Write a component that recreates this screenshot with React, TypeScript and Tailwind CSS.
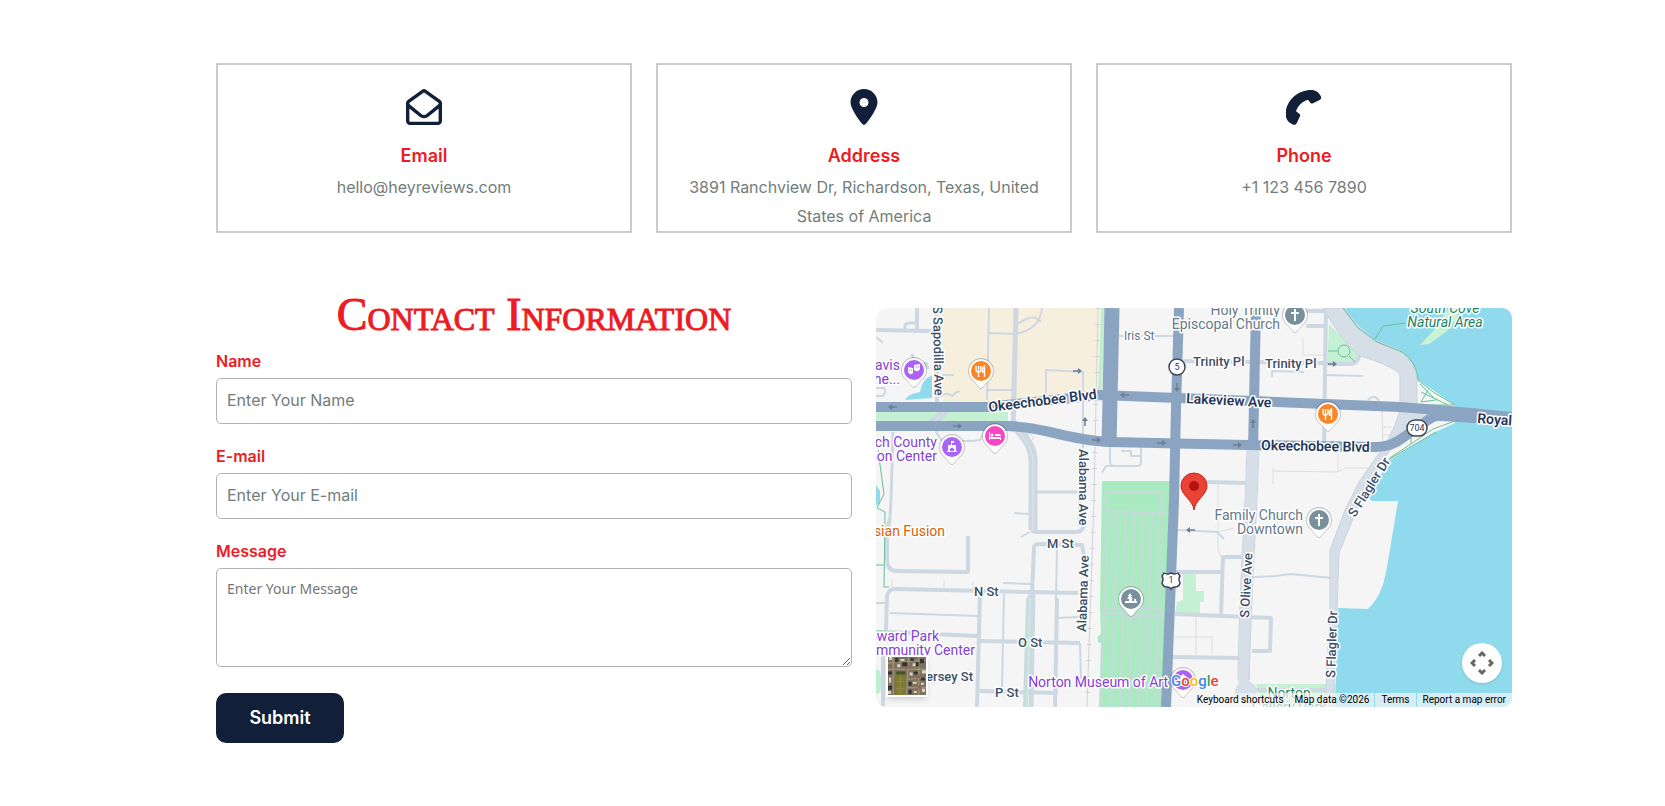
import type { ReactNode } from "react";
import { FaLocationDot, FaRegEnvelopeOpen } from "react-icons/fa6";

function PhoneIcon() {
  return (
    <svg viewBox="17 15 108 108" className="h-9 w-9 fill-current" aria-hidden="true">
      <path d="M16 90C16 53 50 18 92 18c14 0 25 8 30 20q2 6-3 9L98 58q-5 2-8-2l-7-9C66 52 53 64 47 82l10 7q4 3 2 8l-10 21q-3 6-10 4C24 117 16 106 16 90Z" />
    </svg>
  );
}

const cards = [
  { title: "Email", text: "hello@heyreviews.com", icon: <FaRegEnvelopeOpen className="h-9 w-9" /> },
  {
    title: "Address",
    text: "3891 Ranchview Dr, Richardson, Texas, United States of America",
    icon: <FaLocationDot className="h-9 w-9" />,
  },
  { title: "Phone", text: "+1 123 456 7890", icon: <PhoneIcon /> },
];

// local streets: [path, width]
const streets: [string, number][] = [
  ["M0 22L56 23", 4],
  ["M41 0V22", 4],
  ["M29 21V17Q29 15 34 15H41", 3],
  ["M0 29L7 35", 2],
  ["M36 46L38 54Q44 60 50 55L52 61", 3],
  ["M0 80H8Q11 84 7 88H0", 2],
  ["M61 0V94", 4],
  ["M61 124L60 116L72 103", 4],
  ["M53 115L66 103", 4],
  ["M113 0L111 92", 2],
  ["M140 0L137 124", 5],
  ["M113 25L139 26Q164 22 166 0M142 16Q158 4 165 14", 2],
  ["M112 82H136", 2],
  ["M66 67H78", 2],
  ["M64 89Q70 83 76 88Q82 82 84 84", 2],
  ["M170 88V62L207 64V140", 2],
  ["M205 140L203 218", 3],
  ["M17 124L15 192L14 210", 3],
  ["M14 210L11 224V252Q11 263 22 263L92 264V228", 4],
  ["M60 124L66 133H96L104 132L109 122", 2],
  ["M155 184L203 184", 3],
  ["M156 222Q157 224 162 224H200Q207 224 208 216", 4],
  ["M138 205L153 206M145 229L154 224", 2],
  ["M158 240Q158 236 164 236L206 237L208 248", 4],
  ["M158 240L156 285L152 292L149 399", 4],
  ["M157 282L155 399", 5],
  ["M10 322L11 288Q12 281 20 281L202 285", 4],
  ["M14 305L102 308", 2],
  ["M10 324L102 328", 4],
  ["M104 285L101 399", 4],
  ["M104 333L204 335", 4],
  ["M128 286L126 379", 2],
  ["M181 240L180 290", 2],
  ["M181 290L179 399", 4],
  ["M181 310L202 309", 2],
  ["M102 383L182 385", 4],
  ["M204 335L205 372", 2],
  ["M127 275L156 276", 2],
  ["M7 340V399", 4],
  ["M0 295H9", 2],
  ["M242 28H299", 2],
  ["M307 53L376 54M384 54L449 55", 4],
  ["M234 139V154Q234 158 238 158H261Q265 158 265 154V139M226 165L230 158L236 158M245 143H255V148H264", 2],
  ["M331 174L371 175", 4],
  ["M430 18H449M430 3H449", 4],
  ["M450 0L448 135", 4],
  ["M396 69V63L428 64M451 67L487 68", 2],
  ["M449 56H474Q480 56 482 51L484 46", 4],
  ["M302 222L341 224L348 231", 2],
  ["M299 264H345", 4],
  ["M366 249H347L345 307", 4],
  ["M299 306L395 310L394 343H376", 4],
  ["M297 349L364 350", 4],
  ["M377 269L400 268L414 266L456 270", 2],
  ["M492 92Q498 85 503 93", 2],
  ["M380 382H458", 4],
];

const paths: string[] = [
  "M342 176V242L345 249M342 224L358 220",
  "M397 159V176M397 163L462 164L469 160L494 160M462 164V146",
  "M427 30V47H449",
  "M506 102L507 135M507 119H516M507 127H516",
  "M320 308V347M299 329H336V347",
  "M16 280V271M68 280V272M97 281V273",
];

type LabelProps = {
  x: number;
  y: number;
  color?: string;
  size?: number;
  anchor?: "start" | "middle" | "end";
  rotate?: number;
  weight?: number;
  italic?: boolean;
  children: ReactNode;
};

function Label({
  x,
  y,
  color = "#3c4f69",
  size = 13,
  anchor = "start",
  rotate = 0,
  weight = 400,
  italic = false,
  children,
}: LabelProps) {
  return (
    <text
      transform={`translate(${x} ${y}) rotate(${rotate})`}
      fill={color}
      fontSize={size}
      fontWeight={weight}
      fontStyle={italic ? "italic" : "normal"}
      textAnchor={anchor}
      stroke="#fff"
      strokeWidth="3"
      strokeLinejoin="round"
      paintOrder="stroke"
    >
      {children}
    </text>
  );
}

function Pin({ x, y, color, children }: { x: number; y: number; color: string; children: ReactNode }) {
  return (
    <g transform={`translate(${x} ${y})`}>
      <path d="M0 18C-2 18-4 14-7 11A13 13 0 1 1 7 11C4 14 2 18 0 18Z" fill="#0003" />
      <path d="M0 17C-2 17-4 13-7 10A12 12 0 1 1 7 10C4 13 2 17 0 17Z" fill="#fff" />
      <circle r="10" fill={color} />
      <g fill="#fff">{children}</g>
    </g>
  );
}

function Fork() {
  return (
    <g stroke="#fff" strokeWidth="1.400" fill="none">
      <path d="M-5-5V-1Q-5 1-2.500 1T0-1V-5M-2.500-5V6M3.500 6V-5Q1.500-4 1.500 1H3.500" />
    </g>
  );
}

function Cross() {
  return <path d="M-1-6H1V-3H4V-1H1V6H-1V-1H-4V-3H-1Z" />;
}

function MapArrow({ x, y, rotate = 0 }: { x: number; y: number; rotate?: number }) {
  return (
    <g transform={`translate(${x} ${y}) rotate(${rotate})`}>
      <path d="M-4 0H2" stroke="#6b7f95" strokeWidth="1.500" />
      <path d="M1-3L5 0L1 3Z" fill="#6b7f95" />
    </g>
  );
}

function MapDrawing() {
  const purple = "#8440d6";
  const place = "#64798a";
  const bold = "#26385a";

  return (
    <svg
      viewBox="0 0 636 399"
      preserveAspectRatio="xMidYMid slice"
      className="block h-full w-full font-[Roboto,sans-serif]"
      role="img"
      aria-label="Map"
    >
      <rect width="636" height="399" fill="#f5f5f5" />

      {/* blocks, parks */}
      <path d="M66 0H225L220 82L140 95H67Z" fill="#f6efdd" />
      <path d="M225 0H229L226 82H222Z" fill="#c0efd0" />
      <path d="M0 104H132V115H0Z" fill="#c4f1d4" />
      <path d="M29 92Q32 86 44 84Q47 69 56 68V90Z" fill="#90daee" />
      <path d="M0 177L4 183V196L0 197Z" fill="#90daee" />
      <path d="M0 361Q5 361 5 370V380Q5 386 0 386Z" fill="#c0efd0" />
      <path d="M226 173H294L286 399H223L225 335L222 334V328L225 326L224 300Z" fill="#aaeac1" />
      <path d="M307 266H320V283H328V294H324V305H299L301 294L307 292Z" fill="#c4f1d4" />
      <path d="M380 376H462V399H386Z" fill="#c4f1d4" />
      <path d="M453 16L484 47L478 57H451Z" fill="#c4f1d4" />

      {/* water */}
      <path
        d="M467 0L482 20L501 34L526 44Q541 54 542 72L557 84L579 97V115L557 125L514 152L491 189L496 193H522L511 259Q508 276 504 284Q500 293 492 301L462 300L459 399H636V0Z"
        fill="#90daee"
      />
      <path d="M573 0L560 20L544 37L553 36L570 24L580 12L584 0Z" fill="#c8f3d4" />
      <path d="M542 72L579 97V108H540ZM514 152L557 125L570 114L540 112L500 150Z" fill="#f5f5f5" />

      {/* cemetery alleys */}
      <g stroke="#c8d8dd" strokeWidth="2" fill="none">
        <path d="M231 204V185H285V204M229 203L290 205" />
        <path d="M232 206L225 399M241 206L235 399M250 206L244 399M259 206L253 399M268 206L262 399M276 206L270 399M284 206L280 399" />
        <path d="M226 301H280L288 305L280 308L226 305M250 307L255 312L262 307" />
      </g>

      {/* railway */}
      <g fill="none" stroke="#d3d3d6">
        <path d="M222 0L218 190L211 399" />
        <path d="M222 0L218 190L211 399" strokeWidth="5" strokeDasharray="1 15" />
      </g>

      <g stroke="#dedee0" strokeWidth="1" fill="none">
        {paths.map((d) => (
          <path key={d} d={d} />
        ))}
      </g>
      <g stroke="#cdd8e2" fill="none" strokeLinejoin="round">
        {streets.map(([d, width]) => (
          <path key={d} d={d} strokeWidth={width} />
        ))}
      </g>

      {/* divided road going south */}
      <path d="M137 116Q157 136 157 152V222" stroke="#cdd8e2" strokeWidth="9" fill="none" />
      <path d="M137 118Q157 138 157 152V222" stroke="#e0e6eb" strokeWidth="1" fill="none" />
      <path d="M148 130L153 125L158 130L151 137" stroke="#cdd8e2" fill="none" />
      <path d="M154 290L151 399" stroke="#c0efd0" strokeWidth="2" />

      {/* waterfront drive and Olive Ave */}
      <path
        d="M447 0H469Q476 14 499 32L524 42Q541 54 541 72V103L557 107L520 135L509 149L486 189L463 245L461 300L457 399H449L454 300V242L469 202L483 174L510 135Q520 118 524 102V67Q520 59 484 48Q466 34 447 0Z"
        fill="#d6dfe7"
        stroke="#c8d3de"
      />
      <path d="M377 140L375 192Q369 300 368 380" stroke="#d6dfe7" strokeWidth="11" fill="none" />
      <path d="M371 140L369 192Q363 300 362 372M383 140L381 192Q375 300 373 372" stroke="#c8d3de" fill="none" />
      <circle cx="370" cy="384" r="11" fill="#d6dfe7" />

      {/* shore trails */}
      <g fill="none" stroke="#67bf98">
        <path d="M467 0L482 20L501 34L526 44Q541 54 542 72L557 84L579 97H545M544 76L560 92L545 94L552 82M545 84L572 97" />
        <path d="M579 113L557 121L514 150M560 124L512 152M535 128V136M548 116L540 128" />
        <path d="M499 31L507 18L529 15" />
        <circle cx="468" cy="43" r="6" />
        <path d="M452 43H461M473 48L479 54" />
        <path d="M2 142L8 186L1 200L9 204L8 279H13M0 257H8M0 323H11" />
      </g>

      {/* main roads */}
      <g stroke="#8ba4c1" fill="none">
        <path d="M0 99H112L140 96L224 87L302 90L424 95L524 99L574 103L636 109" strokeWidth="10" />
        <path d="M0 118H134Q152 119 174 124Q210 133 234 134L371 137L497 139Q514 140 528 129L552 112Q560 106 574 105" strokeWidth="10" />
        <path d="M557 106L590 108L636 111" strokeWidth="13" />
        <path d="M236 0L233 138" strokeWidth="15" />
        <path d="M303 0L300 100L298 192L290 399" strokeWidth="10" />
        <path d="M380 0L377 142" strokeWidth="10" />
      </g>

      <MapArrow x={17} y={99} rotate={180} />
      <MapArrow x={81} y={118} />
      <MapArrow x={201} y={63} />
      <MapArrow x={209} y={114} rotate={-90} />
      <MapArrow x={220} y={132} rotate={4} />
      <MapArrow x={249} y={87} rotate={180} />
      <MapArrow x={301} y={79} rotate={90} />
      <MapArrow x={285} y={135} />
      <MapArrow x={361} y={137} />
      <MapArrow x={377} y={116} rotate={-90} />
      <MapArrow x={315} y={222} rotate={180} />
      <MapArrow x={456} y={56} />

      {/* street names */}
      <Label x={113} y={104} rotate={-7} size={14} weight={600} color={bold}>Okeechobee Blvd</Label>
      <Label x={385} y={142} rotate={1} size={14} weight={600} color={bold}>Okeechobee Blvd</Label>
      <Label x={310} y={95} rotate={3} size={14} weight={600} color={bold}>Lakeview Ave</Label>
      <Label x={601} y={115} rotate={4} size={14} weight={600} color={bold}>Royal Park Bridge</Label>
      <Label x={248} y={32} size={12} color="#64748b">Iris St</Label>
      <Label x={317} y={58} weight={500}>Trinity Pl</Label>
      <Label x={389} y={60} weight={500}>Trinity Pl</Label>
      <Label x={57} y={-2} rotate={89} weight={500}>S Sapodilla Ave</Label>
      <Label x={203} y={141} rotate={90} weight={500}>Alabama Ave</Label>
      <Label x={210} y={324} rotate={-88} weight={500}>Alabama Ave</Label>
      <Label x={373} y={310} rotate={-87} weight={500}>S Olive Ave</Label>
      <Label x={479} y={210} rotate={-58} weight={500}>S Flagler Dr</Label>
      <Label x={459} y={370} rotate={-88} weight={500}>S Flagler Dr</Label>
      <Label x={171} y={240} weight={500}>M St</Label>
      <Label x={98} y={288} weight={500}>N St</Label>
      <Label x={142} y={339} weight={500}>O St</Label>
      <Label x={119} y={389} weight={500}>P St</Label>
      <Label x={97} y={373} anchor="end" weight={500}>Jersey St</Label>

      {/* places */}
      <Label x={24} y={62} size={14} color={purple} anchor="end">Kravis</Label>
      <Label x={24} y={76} size={14} color={purple} anchor="end">Center for the...</Label>
      <Label x={61} y={139} size={14} color={purple} anchor="end">Palm Beach County</Label>
      <Label x={61} y={153} size={14} color={purple} anchor="end">Convention Center</Label>
      <Label x={69} y={228} size={14} color="#d65f08" anchor="end">Asian Fusion</Label>
      <Label x={63} y={333} size={14} color={purple} anchor="end">Howard Park</Label>
      <Label x={99} y={347} size={14} color={purple} anchor="end">Community Center</Label>
      <Label x={292} y={379} size={14} color={purple} anchor="end">Norton Museum of Art</Label>
      <Label x={404} y={7} size={14} color={place} anchor="end">Holy Trinity</Label>
      <Label x={404} y={21} size={14} color={place} anchor="end">Episcopal Church</Label>
      <Label x={427} y={212} size={14} color={place} anchor="end">Family Church</Label>
      <Label x={427} y={226} size={14} color={place} anchor="end">Downtown</Label>
      <Label x={569} y={5} size={14} color="#198363" anchor="middle" italic>South Cove</Label>
      <Label x={569} y={19} size={14} color="#198363" anchor="middle" italic>Natural Area</Label>
      <Label x={413} y={390} size={14} color="#198363" anchor="middle">Norton</Label>
      <Label x={413} y={404} size={14} color="#198363" anchor="middle">Gallery Park</Label>

      {/* route shields */}
      <g stroke="#3a4656" strokeWidth="1.500" fill="#fff">
        <circle cx="301" cy="59" r="8" />
        <rect x="531" y="112" width="20" height="16" rx="8" />
        <path d="M288 265Q291 267 295 265Q299 267 302 265L304 268Q302 271 304 275Q303 279 299 279Q296 279 295 281Q294 279 291 279Q287 279 286 275Q288 271 286 268Z" />
      </g>
      <g fill="#26385a" fontSize="9" textAnchor="middle">
        <text x="301" y="62">5</text>
        <text x="541" y="123">704</text>
        <text x="295" y="275">1</text>
      </g>

      {/* pins */}
      <Pin x={38} y={62} color="#ab63f5">
        <path d="M-6-3L-1-2V3Q-4 6-6 2ZM0-5L6-6V-1Q4 3 0 0Z" />
        <path d="M-5 0H-4M-3 0H-2M2-3H3M4-3H5" stroke="#ab63f5" />
      </Pin>
      <Pin x={105} y={63} color="#fb8426"><Fork /></Pin>
      <Pin x={452} y={106} color="#fb8426"><Fork /></Pin>
      <Pin x={119} y={128} color="#f547c4">
        <path d="M-6-4H-5V1H6V4H5V3H-5V4H-6ZM0-2H4Q6-2 6 0H0Z" />
        <circle cx="-3" cy="-1" r="1.500" />
      </Pin>
      <Pin x={76} y={139} color="#ab63f5">
        <path d="M-4-2H-1V-6H2V-4H0V-2H4V4H5V5H-5V4H-4Z" />
        <path d="M-2 4V2Q0-1 2 2V4Z" fill="#ab63f5" />
      </Pin>
      <Pin x={419} y={7} color="#78909c"><Cross /></Pin>
      <Pin x={443} y={212} color="#78909c"><Cross /></Pin>
      <Pin x={255} y={291} color="#78909c">
        <path d="M-1-6L1-3H0L2 0H1V2H3V0H5V2H6V4H-6V2H-2V0H-4L-2-3H-3Z" />
      </Pin>
      <Pin x={307} y={372} color="#ab63f5">
        <path d="M-6-1L0-6L6-1V0H-6ZM-5 1H-3V4H-5ZM-1 1H1V4H-1ZM3 1H5V4H3ZM-6 5H6V6H-6Z" />
      </Pin>

      <path
        d="M318 202C317 192 305 187 305 178A13 13 0 1 1 331 178C331 187 319 192 318 202Z"
        fill="#ea4335"
        stroke="#c5221f"
      />
      <circle cx="318" cy="178" r="5" fill="#b31412" />
    </svg>
  );
}

function SatelliteThumb() {
  return (
    <svg viewBox="0 0 37 37" className="block h-full w-full">
      <rect width="37" height="37" fill="#7d725c" />
      <path d="M0 6L37 3M0 12H37M18 22L37 20M18 30H37M5 0V37M20 0L18 37M30 0V37" stroke="#a8997f" />
      <path d="M1 0H4V3H1ZM12 2H16V4H12ZM24 6H27V9H24ZM33 13H37V16H33ZM1 20H3V25H1ZM24 24H28V26H24ZM33 31H36V34H33ZM9 7H12V10H9ZM21 15H24V18H21ZM32 25H35V27H32ZM0 33H3V36H0ZM25 33H28V35H25Z" fill="#ddd3c2" />
      <path d="M7 1H10V5H7ZM31 2H35V6H31ZM27 5H30V9H27ZM0 14H4V17H0ZM25 14H29V17H25ZM0 28H4V32H0ZM20 32H23V36H20ZM32 20H36V23H32ZM14 5H19V9H14ZM20 24H23V28H20ZM22 1H25V4H22Z" fill="#2f3634" />
      <path d="M17 9H20V12H17ZM28 18H31V21H28ZM1 8H3V11H1ZM29 28H32V31H29Z" fill="#96604c" />
      <path d="M8 14H17V37H7Z" fill="#7d7a34" />
      <path d="M8 14H17V17H8Z" fill="#47532c" />
      <path d="M12 18V37M8 24H16M8 31H16" stroke="#938a4c" />
    </svg>
  );
}

function GoogleMap() {
  return (
    <div className="relative h-[399px] overflow-hidden rounded-[10px] font-[Roboto,sans-serif]">
      <MapDrawing />

      {/* map type */}
      <button
        type="button"
        aria-label="Show satellite imagery"
        className="absolute bottom-[10px] left-[10px] h-[42px] w-[42px] border-2 border-white shadow-md"
      >
        <SatelliteThumb />
      </button>

      {/* camera controls */}
      <button
        type="button"
        aria-label="Map camera controls"
        className="absolute right-[10px] bottom-6 flex h-10 w-10 items-center justify-center rounded-full bg-white shadow"
      >
        <svg viewBox="0 0 24 24" className="h-6 w-6 fill-none stroke-[#666] stroke-3">
          <path d="M9 5L12 2L15 5M9 19L12 22L15 19M5 9L2 12L5 15M19 9L22 12L19 15" />
        </svg>
      </button>

      <a
        href="#google"
        className="absolute bottom-[14px] left-[295px] text-[15px] leading-6 font-medium [paint-order:stroke] [-webkit-text-stroke:2px_white]"
      >
        <span className="text-[#4285f4]">G</span>
        <span className="text-[#ea4335]">o</span>
        <span className="text-[#fbbc04]">o</span>
        <span className="text-[#4285f4]">g</span>
        <span className="text-[#34a853]">l</span>
        <span className="text-[#ea4335]">e</span>
      </a>

      {/* attribution */}
      <div className="absolute right-0 bottom-0 flex gap-px text-[10px] leading-[14px] text-black">
        <button type="button" className="bg-[#f5f5f5]/70 px-[5px]">Keyboard shortcuts</button>
        <span className="bg-[#f5f5f5]/70 px-[5px]">Map data ©2026</span>
        <a href="#terms" className="bg-[#f5f5f5]/70 px-[6px]">Terms</a>
        <a href="#report" className="bg-[#f5f5f5]/70 px-[6px]">Report a map error</a>
      </div>
    </div>
  );
}

const labelClass = "mb-[5px] block text-base font-semibold text-[#ed1b24]";
const fieldClass =
  "block w-full rounded-[5px] border border-[#b2b2b2] bg-white px-[10px] outline-none";

function ContactForm() {
  return (
    <form onSubmit={(e) => e.preventDefault()}>
      <h2 className="mb-2 text-center font-['Liberation_Serif',serif] text-[46px] leading-[52px] text-[#ed1b24] [font-variant-caps:small-caps] [-webkit-text-stroke:1px_#ed1b24]">
        Contact Information
      </h2>

      <label htmlFor="name" className={labelClass}>Name</label>
      <input
        id="name"
        type="text"
        placeholder="Enter Your Name"
        className={`${fieldClass} mb-5 h-[46px] pb-[2px] placeholder:text-[#727d7b]`}
      />

      <label htmlFor="email" className={labelClass}>E-mail</label>
      <input
        id="email"
        type="email"
        placeholder="Enter Your E-mail"
        className={`${fieldClass} mb-5 h-[46px] pb-[2px] placeholder:text-[#727d7b]`}
      />

      <label htmlFor="message" className={labelClass}>Message</label>
      <textarea
        id="message"
        rows={4}
        placeholder="Enter Your Message"
        className={`${fieldClass} h-[99px] py-[10px] font-['Noto_Sans',sans-serif] text-sm placeholder:text-[#757575]`}
      />

      <button
        type="submit"
        className="mt-[26px] h-[50px] w-32 rounded-[10px] bg-[#111f38] text-lg font-semibold text-white"
      >
        Submit
      </button>
    </form>
  );
}

export default function App() {
  return (
    <main className="bg-white pt-[63px] pr-[153px] pb-16 pl-[216px] font-[Inter,sans-serif]">
      {/* info cards */}
      <div className="grid grid-cols-3 gap-6">
        {cards.map((card) => (
          <div
            key={card.title}
            className="flex flex-col items-center border-2 border-[#cbcbcb] px-5 pt-6 text-center"
          >
            <div className="text-[#111f38]">{card.icon}</div>
            <h3 className="mt-[17px] text-lg leading-7 font-semibold text-[#ed1b24]">{card.title}</h3>
            <p className="mt-[3px] text-base leading-[29px] text-[#727d7b]">{card.text}</p>
          </div>
        ))}
      </div>

      {/* form + map */}
      <div className="mt-14 grid grid-cols-2 items-start gap-6">
        <ContactForm />
        <div className="pt-[19px]">
          <GoogleMap />
        </div>
      </div>
    </main>
  );
}
